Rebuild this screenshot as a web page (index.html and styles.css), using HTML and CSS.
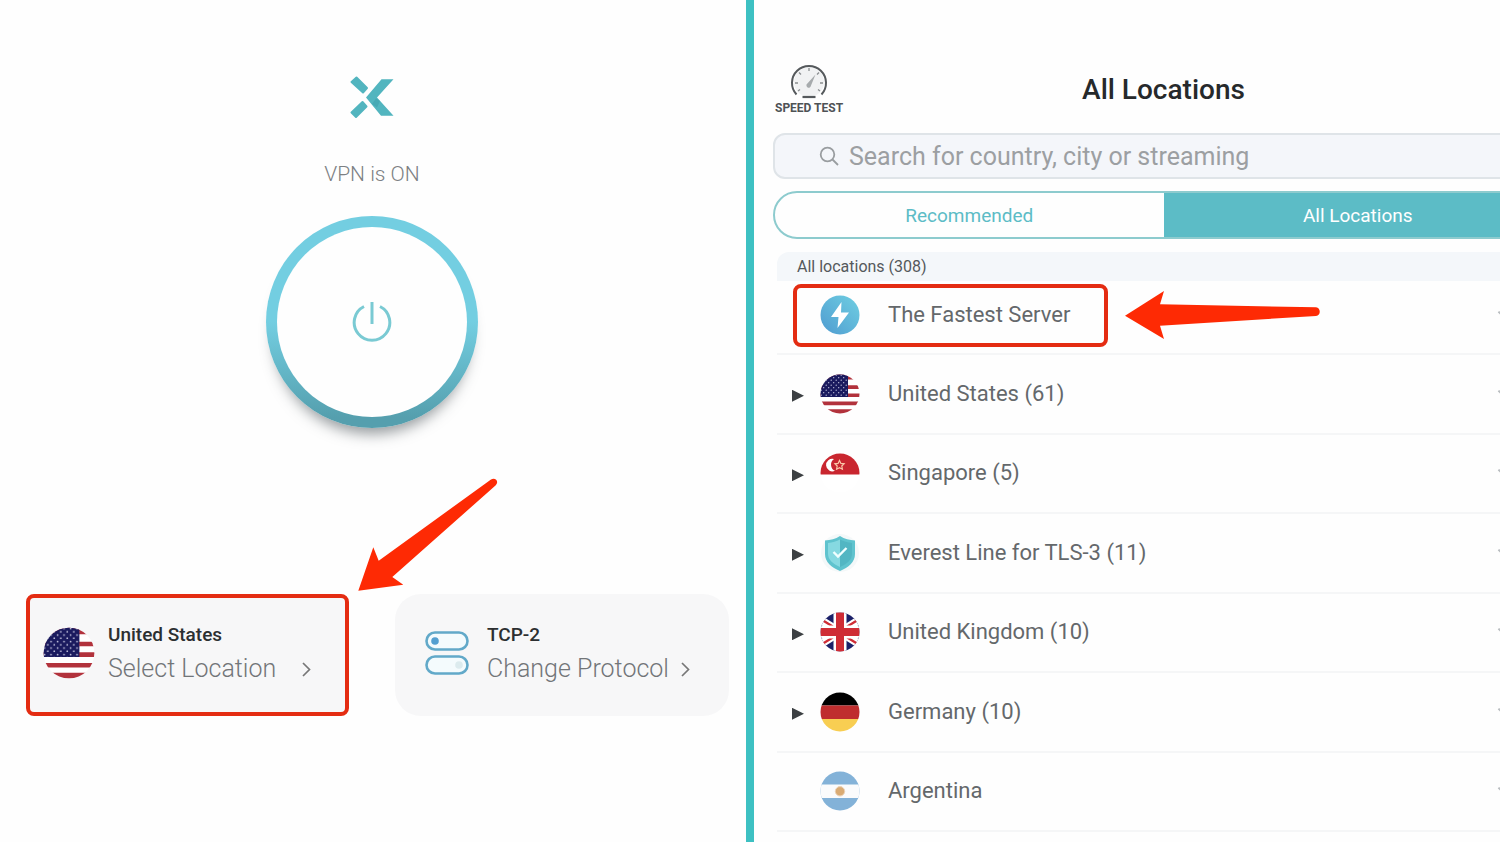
FILE: index.html
```html
<!DOCTYPE html>
<html lang="en">
<head>
<meta charset="utf-8">
<title>VPN – All Locations</title>
<link rel="stylesheet" href="styles.css">
</head>
<body>
<svg class="defs" aria-hidden="true">
  <defs>
    <clipPath id="disc"><circle cx="20" cy="20" r="19.5"/></clipPath>
    <linearGradient id="boltFill" x1="0" y1="1" x2="1" y2="0"><stop offset="0" stop-color="#4f9bd0"/><stop offset="1" stop-color="#6fcfe2"/></linearGradient>
    <pattern id="stars" width="5" height="5" patternUnits="userSpaceOnUse"><circle cx="1.2" cy="1.2" r=".65" fill="#c9c9e2"/><circle cx="3.7" cy="3.7" r=".65" fill="#c9c9e2"/></pattern>
    <symbol id="us" viewBox="0 0 40 40">
      <g clip-path="url(#disc)">
        <path fill="#fff" d="M0 0h40v40H0z"/>
        <path fill="#b2323c" d="M0 0h40v5.5H0zM0 11.3h40v3.6H0zM0 19.5h40v3.6H0zM0 27.6h40v3.6H0zM0 35.2h40V40H0z"/>
        <path fill="#1a1a5e" d="M0 0h28v23H0z"/>
        <path fill="url(#stars)" d="M0 0h28v23H0z"/>
      </g>
    </symbol>
    <symbol id="star" viewBox="0 0 26 26"><path fill="none" stroke="#b9bdc0" stroke-width="1.6" stroke-linejoin="round" d="m13 2 3.3 7.4 8 .8-6 5.400 1.700 7.900-7-4.100-7 4.100 1.700-7.900-6-5.400 8-.8z"/></symbol>
    <symbol id="chevron" viewBox="0 0 12 18"><path fill="none" stroke="#777" stroke-width="1.700" d="m2 3 6.500 6.500L2 16"/></symbol>
  </defs>
</svg>

<main class="screens">
  <section class="home">
    <svg class="logo" viewBox="0 0 44 43" role="img" aria-label="VPN logo" fill="#52b5bf">
      <path stroke="#52b5bf" stroke-width="2" stroke-linejoin="round" d="m1.500 6 5-4.500L17 12l-4 4.500zM1.500 36.500l11-10.500 4 4.500L6 41z"/>
      <path d="M16 21.500 31.500 3.300h12L27 21.500l16.500 18.200H31z"/>
      <path fill="#3a9eaa" d="m22 28 4-5.500 4 2.500-3 6.500z" opacity=".5"/>
    </svg>
    <p class="status">VPN is ON</p>
    <button class="power" aria-label="Turn VPN off">
      <span class="power-face">
        <svg class="power-icon" viewBox="0 0 40 40" fill="none" stroke="#7acad3" stroke-width="3"><path d="M12 4.500a17.800 17.800 0 1 0 16 0M20 0v22"/></svg>
      </span>
    </button>
    <div class="cards">
      <button class="card card-marked">
        <svg class="card-flag" viewBox="0 0 40 40"><use href="#us"/></svg>
        <span class="card-text"><strong class="card-title">United States</strong><span class="card-sub">Select Location</span></span>
        <svg class="chevron"><use href="#chevron"/></svg>
      </button>
      <button class="card">
        <svg class="card-toggle" viewBox="0 0 44 46" fill="#f4fbfd" stroke="#62a9c9" stroke-width="2.600">
          <rect x="1.500" y="2.500" width="41" height="17" rx="8.500"/>
          <rect x="1.500" y="26.500" width="41" height="17" rx="8.500"/>
          <circle cx="10" cy="11" r="3.800" fill="#549fd0" stroke="none"/>
          <circle cx="34" cy="35" r="3.800" fill="#dcebee" stroke="none"/>
        </svg>
        <span class="card-text"><strong class="card-title">TCP-2</strong><span class="card-sub">Change Protocol</span></span>
        <svg class="chevron"><use href="#chevron"/></svg>
      </button>
      <svg class="arrow-down" viewBox="0 0 180 140" aria-hidden="true"><path fill="#fe2a04" d="m18.300 130.800 15-43.500 5.400 13.400L151 19.500c4.500-2.500 8.500 2 4.500 6L52.300 117l11 7.700z"/></svg>
    </div>
  </section>

  <section class="locations">
    <div class="sheet">
      <header class="sheet-head">
        <button class="speed">
          <svg class="gauge" viewBox="0 0 38 36" fill="none">
            <circle cx="19" cy="18" r="15" fill="#f1f2f3"/>
            <path stroke="#55595c" stroke-width="2" d="M6.500 30.500a17 17 0 1 1 25 0"/>
            <path stroke="#8a8e90" stroke-width="1.300" d="M19 4v3M9 8.500l2 2M29 8.500l-2 2M5 19h3M33 19h-3M8 27l2-1.500M30 27l-2-1.500"/>
            <path fill="#a7abad" d="m25.500 10.500-4.500 11a2.300 2.300 0 1 1-3.600-2z"/>
            <path stroke="#55595c" stroke-width="2.200" d="M12.500 33h13"/>
          </svg>
          <span>SPEED TEST</span>
        </button>
        <h1 class="title">All Locations</h1>
      </header>

      <label class="search">
        <svg class="lens" viewBox="0 0 20 20" fill="none" stroke="#999da0" stroke-width="1.800"><circle cx="8.500" cy="8.500" r="6.800"/><path d="m13.500 13.500 5.500 5.500"/></svg>
        <input class="search-input" type="text" aria-label="Search locations" placeholder="Search for country, city or streaming">
      </label>

      <nav class="tabs">
        <button class="tab">Recommended</button>
        <button class="tab tab-active">All Locations</button>
      </nav>

      <h2 class="group">All locations (308)</h2>
      <ul class="list">
        <li class="row row-first">
          <button class="place"><span class="twist"></span>
            <svg class="flag" viewBox="0 0 40 40"><circle cx="20" cy="20" r="19.500" fill="url(#boltFill)"/><path fill="#fff" d="M21.500 7 11 22h7.500L17.500 33 29 17.500h-8z"/></svg>
            The Fastest Server</button>
          <button class="fav" aria-label="Favourite The Fastest Server"><svg class="star"><use href="#star"/></svg></button>
          <span class="marker"></span>
          <svg class="arrow-left" viewBox="0 0 210 60" aria-hidden="true"><path fill="#fe2a04" d="M5 30.700 44 6l-4 13.300 156 3c5 .7 5 8 0 8.700L40 40.700l4 13.300z"/></svg>
        </li>
        <li class="row">
          <button class="place"><span class="twist twist-on"></span>
            <svg class="flag" viewBox="0 0 40 40"><use href="#us"/></svg>
            United States (61)</button>
          <button class="fav" aria-label="Favourite United States"><svg class="star"><use href="#star"/></svg></button>
        </li>
        <li class="row">
          <button class="place"><span class="twist twist-on"></span>
            <svg class="flag" viewBox="0 0 40 40"><g clip-path="url(#disc)"><path fill="#fff" d="M0 0h40v40H0z"/><path fill="#c9262f" d="M0 0h40v21.500H0z"/><path fill="#fff" d="M14 6a6.300 6.300 0 1 0 1 11.800A6.800 6.800 0 0 1 14 6z"/><path fill="none" stroke="#fbc8a8" stroke-width="1.200" d="m19.500 7.500 1.400 2.900 3.200.4-2.300 2.200.6 3.200-2.900-1.500-2.900 1.500.6-3.200-2.300-2.200 3.200-.4z"/></g></svg>
            Singapore (5)</button>
          <button class="fav" aria-label="Favourite Singapore"><svg class="star"><use href="#star"/></svg></button>
        </li>
        <li class="row">
          <button class="place"><span class="twist twist-on"></span>
            <svg class="flag" viewBox="0 0 40 40"><circle cx="20" cy="20" r="19" fill="#f4f8f9"/><path fill="#5fc3ce" d="M20 3c4.500 3 9.500 4.200 15 4.500V21c0 8-6.500 13.500-15 17C11.500 34.500 5 29 5 21V7.500C10.500 7.200 15.500 6 20 3z"/><path fill="#86d9e1" d="M20 6.500V34C13 31 8 27 8 20.500V10c4.500-.4 8.500-1.500 12-3.500z"/><path fill="#46aab8" d="M20 6.500V34c7-3 12-7 12-13.500V10c-4.500-.4-8.500-1.500-12-3.500z" opacity=".5"/><path fill="none" stroke="#f0ffff" stroke-width="2.400" d="m13.500 19 4.500 4.500 8.500-8.500"/></svg>
            Everest Line for TLS-3 (11)</button>
          <button class="fav" aria-label="Favourite Everest Line"><svg class="star"><use href="#star"/></svg></button>
        </li>
        <li class="row">
          <button class="place"><span class="twist twist-on"></span>
            <svg class="flag" viewBox="0 0 40 40"><g clip-path="url(#disc)"><path fill="#1b2068" d="M0 0h40v40H0z"/><path stroke="#fff" stroke-width="8" d="M-4 5 44 35M-4 35 44 5"/><path stroke="#cf2c35" stroke-width="2.400" d="M-5 3.500 20 19M20 21l25 15.500M-5 36.500 20 21M20 19 45 3.500"/><path stroke="#fff" stroke-width="13" d="M20 0v40M0 20h40"/><path stroke="#cf2c35" stroke-width="8" d="M20 0v40M0 20h40"/></g></svg>
            United Kingdom (10)</button>
          <button class="fav" aria-label="Favourite United Kingdom"><svg class="star"><use href="#star"/></svg></button>
        </li>
        <li class="row">
          <button class="place"><span class="twist twist-on"></span>
            <svg class="flag" viewBox="0 0 40 40"><g clip-path="url(#disc)"><path d="M0 0h40v13.500H0z"/><path fill="#bf2d2e" d="M0 13.500h40V27H0z"/><path fill="#f8ce52" d="M0 27h40v13H0z"/></g></svg>
            Germany (10)</button>
          <button class="fav" aria-label="Favourite Germany"><svg class="star"><use href="#star"/></svg></button>
        </li>
        <li class="row">
          <button class="place"><span class="twist"></span>
            <svg class="flag" viewBox="0 0 40 40"><g clip-path="url(#disc)"><path fill="#83b2d8" d="M0 0h40v40H0z"/><path fill="#fafbfc" d="M0 13.500h40V27H0z"/></g><circle cx="20" cy="20.300" r="4.700" fill="#d9ab74" stroke="#ecd3b8"/></svg>
            Argentina</button>
          <button class="fav" aria-label="Favourite Argentina"><svg class="star"><use href="#star"/></svg></button>
        </li>
      </ul>
    </div>
  </section>
</main>
</body>
</html>
```
FILE: styles.css
```css
* { box-sizing: border-box; }

body {
  margin: 0;
  background: #fefefe;
  color: #64686b;
  font-family: Roboto, "Liberation Sans", sans-serif;
}

button {
  padding: 0;
  border: 0;
  background: none;
  color: inherit;
  font: inherit;
  text-align: left;
  cursor: pointer;
}

svg { display: block; flex: none; }
.defs { position: absolute; width: 0; height: 0; }

.screens {
  display: grid;
  grid-template-columns: 1fr 1fr;
  min-height: 100vh;
}

/* Connected screen */
.home {
  display: flex;
  flex-direction: column;
  align-items: center;
  padding-top: 76px;
  padding-right: 2px;
  border-right: 4px solid #3dc0c2;
}

.logo { width: 44px; height: 43px; }

.status {
  margin: 42px 0 29px;
  color: #7c8083;
  font-size: 21px;
  line-height: 26px;
  font-weight: 300;
}

.power {
  width: 212px;
  height: 212px;
  padding: 11px;
  border-radius: 50%;
  background: linear-gradient(#73cee1 50%, #559fae 95%);
  box-shadow: 0 14px 14px -8px rgba(50, 60, 65, .5);
}

.power-face {
  display: grid;
  place-items: center;
  height: 100%;
  border-radius: 50%;
  background: #fefefe;
}

.power-icon { width: 40px; height: 40px; }

.cards {
  position: relative;
  display: grid;
  grid-template-columns: 1fr 1fr;
  gap: 44px;
  align-self: stretch;
  margin-top: 166px;
  padding: 0 15px 0 17px;
}

.card {
  display: flex;
  align-items: center;
  min-height: 122px;
  padding: 0 30px 4px;
  border-radius: 26px;
  background: #f7f7f8;
}

.card-marked {
  margin: 0 2px 0 9px;
  padding: 0 13px 4px;
  border: 4px solid #e42c12;
  border-radius: 8px;
}

.card-flag { width: 52px; height: 52px; margin-right: 13px; }
.card-toggle { width: 44px; height: 46px; margin-right: 18px; }
.card-text { width: 187px; white-space: nowrap; }
.card-title, .card-sub { display: block; }

.card-title {
  color: #2c2f31;
  font-size: 19px;
  line-height: 32px;
  font-weight: 500;
}

.card-sub {
  color: #727578;
  font-size: 25px;
  line-height: 36px;
  font-weight: 300;
}

.chevron { width: 12px; height: 18px; margin: 32px 0 0 6px; }

.arrow-down {
  position: absolute;
  left: 340px;
  top: -134px;
  width: 180px;
  height: 140px;
}

/* Locations screen; the sheet runs past the right edge */
.locations {
  overflow: hidden;
  border-left: 4px solid #3dc0c2;
}

.sheet {
  display: flex;
  flex-direction: column;
  min-height: 100%;
  margin-right: -54px;
  padding: 64px 0 10px 19px;
}

.sheet-head {
  display: grid;
  grid-template-columns: 1fr auto 1fr;
  align-items: center;
}

.speed {
  justify-self: start;
  padding-left: 2px;
  color: #4e5255;
  font-size: 12px;
  line-height: 16px;
  font-weight: 700;
}

.gauge { width: 38px; height: 36px; margin: 0 auto; }

.title {
  margin: 0;
  color: #26292b;
  font-size: 28px;
  line-height: 34px;
  font-weight: 500;
}

.search {
  display: flex;
  align-items: center;
  gap: 10px;
  height: 46px;
  margin-top: 17px;
  padding-left: 44px;
  border: 2px solid #dfe4e8;
  border-radius: 12px;
  background: #f4f6fa;
}

.lens { width: 20px; height: 20px; }

.search-input {
  flex: 1;
  min-width: 0;
  padding: 2px 0 0;
  border: 0;
  outline: 0;
  background: none;
  color: #55595c;
  font: 400 25px/30px Roboto, "Liberation Sans", sans-serif;
}

.search-input::placeholder { color: #9c9fa2; }

.tabs {
  display: grid;
  grid-template-columns: 1fr 1fr;
  height: 48px;
  margin-top: 12px;
  overflow: hidden;
  border: 2px solid #8dcbce;
  border-radius: 24px;
}

.tab {
  color: #5cbcc6;
  font-size: 19px;
  text-align: center;
}

.tab-active { background: #5cbcc6; color: #fff; }

.group {
  margin: 13px 0 0 4px;
  padding-left: 20px;
  border-radius: 12px 0 0 0;
  background: #f4f7fa;
  color: #55595c;
  font-size: 16px;
  line-height: 29px;
  font-weight: 400;
}

.list {
  display: grid;
  grid-template-rows: 74px repeat(6, minmax(60px, 1fr));
  flex: 1;
  margin: 0 0 0 4px;
  padding: 0;
  list-style: none;
}

.row {
  position: relative;
  display: flex;
  align-items: center;
  border-bottom: 2px solid #f5f6f7;
}

.row-first { padding-bottom: 5px; }

.place {
  display: flex;
  flex: 1;
  align-items: center;
  padding-left: 15px;
  font-size: 22px;
  line-height: 40px;
}

.twist { width: 12px; height: 12px; margin: 4px 16px 0 0; }
.twist-on { background: #3c4043; clip-path: polygon(0 0, 100% 50%, 0 100%); }
.flag { width: 40px; height: 40px; margin-right: 28px; }
.fav { margin-right: 31px; }
.star { width: 26px; height: 26px; }

.marker {
  position: absolute;
  left: 16px;
  top: 3px;
  width: 315px;
  height: 63px;
  border: 4px solid #e42c12;
  border-radius: 8px;
  pointer-events: none;
}

.arrow-left {
  position: absolute;
  left: 343px;
  top: 4px;
  width: 210px;
  height: 60px;
}
```
